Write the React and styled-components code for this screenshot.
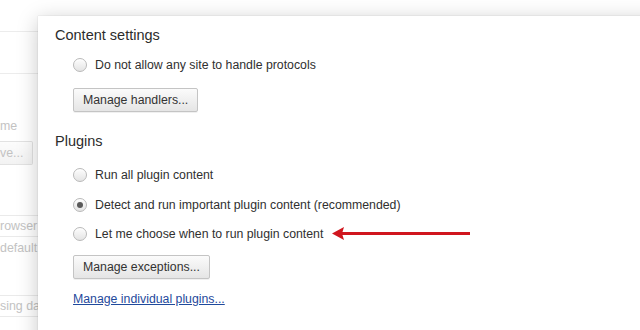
import styled, { createGlobalStyle } from "styled-components";

const Global = createGlobalStyle`
  html, body { margin: 0; padding: 0; background: #fff; }
  body { font-family: "Liberation Sans", Arial, sans-serif; }
`;

const Screen = styled.div`
  position: relative;
  width: 640px;
  height: 330px;
  overflow: hidden;
  background: #fff;
`;

/* faded settings page behind the overlay */
const Page = styled.div`
  display: flex;
  flex-direction: column;
  width: 38px;
  color: #b4b4b4;
  font-size: 12.4px;
  opacity: 0.8;
`;

const PageRule = styled.div`
  height: ${(p) => p.h}px;
  border-bottom: 1px solid #e8e8e8;
`;

const Spacer = styled.div`
  height: ${(p) => p.h}px;
`;

const PageText = styled.div`
  height: ${(p) => p.h || 20}px;
  line-height: ${(p) => p.h || 20}px;
  white-space: nowrap;
`;

const PageButton = styled.div`
  width: 32px;
  height: 22px;
  line-height: 22px;
  border: 1px solid #dcdcdc;
  border-left: none;
  border-radius: 0 2px 2px 0;
  background: linear-gradient(#fcfcfc, #f0f0f0);
  white-space: nowrap;
`;

const PageBox = styled.div`
  height: 20px;
  line-height: 20px;
  border-top: 1px solid #e6e6e6;
  border-bottom: 1px solid #e6e6e6;
  white-space: nowrap;
`;

const Dialog = styled.div`
  position: absolute;
  left: 38px;
  top: 16px;
  width: 640px;
  height: 360px;
  background: #fff;
  box-shadow: 0 4px 20px rgba(0, 0, 0, 0.22), 0 0 1px rgba(0, 0, 0, 0.2);
  padding: 10px 0 0 17px;
  box-sizing: border-box;
  color: #303030;
`;

const SectionTitle = styled.h3`
  margin: 0;
  font-size: 14.5px;
  font-weight: normal;
  line-height: 18px;
  height: ${(p) => p.h}px;
  color: #2c2c2c;
`;

const Section = styled.div`
  display: flex;
  flex-direction: column;
  padding-left: 18px;
  align-items: flex-start;
`;

const RadioRow = styled.label`
  display: flex;
  align-items: center;
  gap: 8px;
  height: 29.5px;
  font-size: 12.3px;
`;

const RadioDot = styled.span`
  width: 14px;
  height: 14px;
  border-radius: 50%;
  box-sizing: border-box;
  border: 1px solid #b9b9b9;
  background: linear-gradient(#fdfdfd, #e4e4e4);
  box-shadow: inset 0 1px 1px rgba(255, 255, 255, 0.9);
  display: flex;
  align-items: center;
  justify-content: center;
  &::after {
    content: "";
    width: 6px;
    height: 6px;
    border-radius: 50%;
    background: ${(p) => (p.checked ? "#5a5a5a" : "transparent")};
  }
`;

const Button = styled.button`
  height: 24px;
  padding: 0 9px;
  margin-top: ${(p) => p.mt || 0}px;
  font-family: "Liberation Sans", Arial, sans-serif;
  font-size: 12.3px;
  color: #333;
  border: 1px solid #c4c4c4;
  border-radius: 2px;
  background: linear-gradient(#fbfbfb, #e5e5e5);
  box-shadow: 0 1px 0 rgba(0, 0, 0, 0.06);
`;

const Link = styled.a`
  margin-top: 13px;
  font-size: 12.3px;
  color: #1f4a9c;
  text-decoration: underline;
`;

const ArrowBox = styled.svg`
  position: absolute;
  left: 330px;
  top: 225px;
`;

const Arrow = () => (
  <ArrowBox width="145" height="18" viewBox="0 0 145 18">
    <line x1="10" y1="8.5" x2="140" y2="8.5" stroke="#d0161e" strokeWidth="3" />
    <polygon points="2,8.5 14,2 12,8.5 14,15" fill="#d0161e" />
  </ArrowBox>
);

export default function App() {
  return (
    <Screen>
      <Global />
      <Page>
        <PageRule h={31} />
        <PageRule h={41} />
        <Spacer h={42} />
        <PageText h={20}>me</PageText>
        <Spacer h={5} />
        <PageButton>ve...</PageButton>
        <Spacer h={50} />
        <PageBox>rowser</PageBox>
        <PageText h={22}>default</PageText>
        <Spacer h={36} />
        <PageBox>sing dat</PageBox>
      </Page>
      <Dialog>
        <SectionTitle h={24}>Content settings</SectionTitle>
        <Section>
          <RadioRow>
            <RadioDot />
            Do not allow any site to handle protocols
          </RadioRow>
          <Button mt={8}>Manage handlers...</Button>
        </Section>
        <Spacer h={20} />
        <SectionTitle h={29}>Plugins</SectionTitle>
        <Section>
          <RadioRow>
            <RadioDot />
            Run all plugin content
          </RadioRow>
          <RadioRow>
            <RadioDot checked />
            Detect and run important plugin content (recommended)
          </RadioRow>
          <RadioRow>
            <RadioDot />
            Let me choose when to run plugin content
          </RadioRow>
          <Button mt={6}>Manage exceptions...</Button>
          <Link href="#">Manage individual plugins...</Link>
        </Section>
      </Dialog>
      <Arrow />
    </Screen>
  );
}
